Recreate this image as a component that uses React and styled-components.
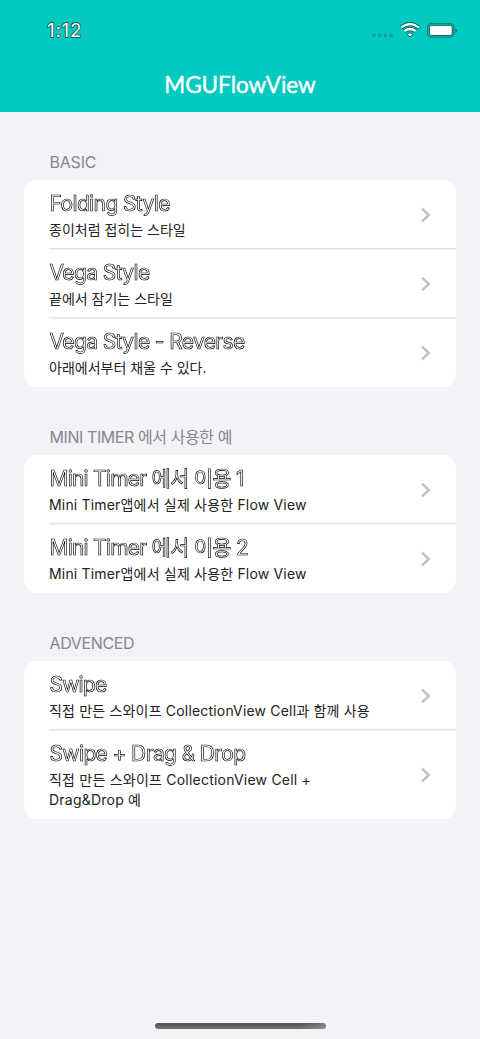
import React from "react";
import styled, { createGlobalStyle } from "styled-components";

const GlobalStyle = createGlobalStyle`
  html, body { margin: 0; background: #f2f2f7; }
  * { box-sizing: border-box; }
`;

const Screen = styled.div`
  width: 480px;
  height: 1039px;
  display: flex;
  flex-direction: column;
  background: #f2f2f7;
  overflow: hidden;
  font-family: Inter, "Noto Sans CJK KR", sans-serif;
`;

const NavBar = styled.header`
  height: 112px;
  flex: none;
  background: #00c9bf;
  display: flex;
  flex-direction: column;
`;

const StatusBar = styled.div`
  height: 60px;
  padding: 2px 23px 0 47px;
  display: flex;
  align-items: center;
  justify-content: space-between;
`;

const Time = styled.span`
  font-size: 19px;
  line-height: 24px;
  font-weight: 400;
  letter-spacing: 0.7px;
  color: #fff;
  -webkit-text-stroke: 1.4px #123c3a;
  paint-order: stroke fill;
`;

const StatusIcons = styled.div`
  display: flex;
  align-items: center;
  padding-bottom: 2px;
`;

const NavTitle = styled.h1`
  margin: 0;
  height: 50px;
  line-height: 50px;
  text-align: center;
  font-family: Lato, sans-serif;
  font-size: 22.5px;
  font-weight: 400;
  letter-spacing: 0;
  color: #fff;
  -webkit-text-stroke: 0.4px #fff;
`;

const List = styled.main`
  flex: 1;
  padding: 0 24px;
`;

const SectionLabel = styled.h2`
  margin: 0;
  height: 68px;
  padding: 39px 0 0 25.5px;
  font-size: 16px;
  line-height: 22px;
  font-weight: 400;
  letter-spacing: ${(p) => p.$tracking}px;
  color: #87878b;
  white-space: nowrap;
`;

const Card = styled.ul`
  list-style: none;
  margin: 0;
  padding: 0;
  background: #fff;
  border-radius: 13px;
  overflow: hidden;
`;

const Row = styled.li`
  height: ${(p) => (p.$tall ? 89 : 69)}px;
  padding-left: 25px;
  display: flex;
`;

const RowBody = styled.div`
  flex: 1;
  display: flex;
  align-items: center;
  justify-content: space-between;
  padding-right: 24px;
  border-top: 1px solid ${(p) => (p.$first ? "#fff" : "#f0f0f2")};
  border-bottom: 1px solid ${(p) => (p.$last ? "#fff" : "#e3e3e5")};
`;

const RowText = styled.div`
  align-self: flex-start;
  padding-top: 9px;
`;

const RowTitle = styled.div`
  padding-left: 0.5px;
  font-size: 21px;
  line-height: 27px;
  letter-spacing: ${(p) => p.$tracking}px;
  color: #fff;
  -webkit-text-stroke: 0.65px #000;
  white-space: nowrap;
  filter: grayscale(1);
`;

const RowDetail = styled.div`
  padding-top: 3px;
  font-size: 14px;
  line-height: 20px;
  letter-spacing: ${(p) => p.$tracking}px;
  color: #222;
  white-space: pre;
`;

const HomeArea = styled.footer`
  height: 20px;
  flex: none;
  display: flex;
  justify-content: center;
  padding-top: 4px;
`;

const HomeIndicator = styled.div`
  width: 171px;
  height: 6px;
  border-radius: 3px;
  background: linear-gradient(90deg, transparent 85%, #a0a0a088), linear-gradient(#505050, #747474);
`;

const Chevron = () => (
  <svg width="12" height="16" viewBox="0 0 12 16" fill="none">
    <path d="M2 1.6 8.8 8 2 14.4" stroke="#c2c2c4" strokeWidth="2.5" />
  </svg>
);

const Signal = () => (
  <svg width="86" height="20" viewBox="371 20 86 20" fill="none">
    <g fill="#149e98">
      <circle cx="374" cy="35.5" r="1.9" />
      <circle cx="379.7" cy="35.5" r="1.9" />
      <circle cx="385.4" cy="35.5" r="1.9" />
      <circle cx="391.1" cy="35.5" r="1.9" />
    </g>
    <g stroke="#07514d" strokeWidth="4">
      <path d="M401.3 27.4Q410 20.6 418.7 27.4" />
      <path d="M404.3 31.1Q410 26.8 415.7 31.1" />
    </g>
    <g stroke="#fff" strokeWidth="2.4">
      <path d="M401.3 27.4Q410 20.6 418.7 27.4" />
      <path d="M404.3 31.1Q410 26.8 415.7 31.1" />
    </g>
    <path d="M407 34Q410 31.8 413 34L410 37Z" fill="#fff" stroke="#07514d" strokeWidth=".8" />
    <rect x="427.6" y="23.6" width="26.4" height="13.6" rx="4" stroke="#07837d" strokeWidth="1.3" />
    <rect x="429.4" y="25.4" width="22.8" height="10" rx="2" fill="#fff" stroke="#063f3c" strokeWidth=".8" />
    <path d="M455.6 28.5Q458.4 30.4 455.6 32.4Z" fill="#07514d" />
  </svg>
);

const sections = [
  {
    label: "BASIC",
    tracking: -0.2,
    rows: [
      { title: "Folding Style", detail: "종이처럼 접히는 스타일" },
      { title: "Vega Style", detail: "끝에서 잠기는 스타일" },
      { title: "Vega Style - Reverse", detail: "아래에서부터 채울 수 있다." },
    ],
  },
  {
    label: "MINI TIMER 에서 사용한 예",
    tracking: -0.42,
    rows: [
      { title: "Mini Timer 에서 이용 1", titleTracking: -0.78, detail: "Mini Timer앱에서 실제 사용한 Flow View", detailTracking: 0.18 },
      { title: "Mini Timer 에서 이용 2", titleTracking: -0.78, detail: "Mini Timer앱에서 실제 사용한 Flow View", detailTracking: 0.18 },
    ],
  },
  {
    label: "ADVENCED",
    tracking: -0.35,
    rows: [
      { title: "Swipe", titleTracking: -0.8, detail: "직접 만든 스와이프 CollectionView Cell과 함께 사용", detailTracking: 0.18 },
      { title: "Swipe + Drag & Drop", detail: "직접 만든 스와이프 CollectionView Cell +\nDrag&Drop 예", detailTracking: 0.22, tall: true },
    ],
  },
];

export default function App() {
  return (
    <Screen>
      <GlobalStyle />
      <NavBar>
        <StatusBar>
          <Time>1:12</Time>
          <StatusIcons>
            <Signal />
          </StatusIcons>
        </StatusBar>
        <NavTitle>MGUFlowView</NavTitle>
      </NavBar>
      <List>
        {sections.map((section) => (
          <section key={section.label}>
            <SectionLabel $tracking={section.tracking}>{section.label}</SectionLabel>
            <Card>
              {section.rows.map((row, i) => (
                <Row key={row.title} $tall={row.tall}>
                  <RowBody $first={i === 0} $last={i === section.rows.length - 1}>
                    <RowText>
                      <RowTitle $tracking={row.titleTracking ?? -0.62}>{row.title}</RowTitle>
                      <RowDetail $tracking={row.detailTracking ?? 0}>{row.detail}</RowDetail>
                    </RowText>
                    <Chevron />
                  </RowBody>
                </Row>
              ))}
            </Card>
          </section>
        ))}
      </List>
      <HomeArea>
        <HomeIndicator />
      </HomeArea>
    </Screen>
  );
}
